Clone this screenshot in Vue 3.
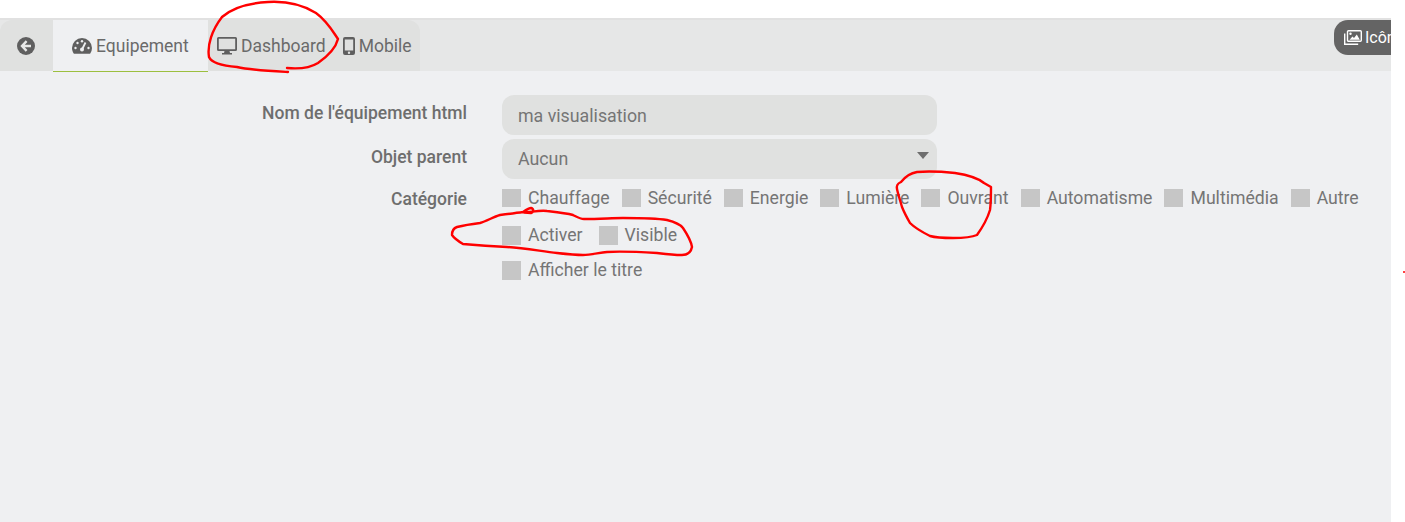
<template>
  <div class="page">
    <div class="panel">
      <div class="tabbar">
        <div class="tabs">
          <a class="tab back">
            <svg class="ico" width="18" height="18" viewBox="0 0 18 18">
              <circle cx="9" cy="9" r="9" fill="#5f5f5f" />
              <path d="M9.6 4.2 5 9l4.6 4.8M5.4 9H14" fill="none" stroke="#e8e9e8" stroke-width="2.4" />
            </svg>
          </a>
          <a class="tab active">
            <svg class="ico" width="20" height="16" viewBox="0 0 20 16">
              <path d="M10 0a10 10 0 0 0-10 10c0 2.2.7 4.2 1.9 5.800h16.200A10 10 0 0 0 20 10 10 10 0 0 0 10 0z" fill="#5f5f5f" />
              <path d="M10 11.500 13.500 4.500" stroke="#eeeff1" stroke-width="1.800" />
              <circle cx="10" cy="11.500" r="2" fill="#eeeff1" />
              <circle cx="3.500" cy="10" r="1.200" fill="#eeeff1" />
              <circle cx="5.500" cy="5" r="1.200" fill="#eeeff1" />
              <circle cx="10" cy="3.200" r="1.200" fill="#eeeff1" />
              <circle cx="16.500" cy="10" r="1.200" fill="#eeeff1" />
            </svg>
            Equipement
          </a>
          <a class="tab">
            <svg class="ico" width="20" height="18" viewBox="0 0 20 18">
              <path fill-rule="evenodd" d="M1.500 0h17A1.500 1.500 0 0 1 20 1.500v11a1.500 1.500 0 0 1-1.500 1.500H12.500l.5 2h2v1.500H5V16h2l.5-2H1.500A1.500 1.500 0 0 1 0 12.500v-11A1.500 1.500 0 0 1 1.500 0zM1.800 1.800v10.400h16.400V1.800z" fill="#5f5f5f" />
            </svg>
            Dashboard
          </a>
          <a class="tab mobile">
            <svg class="ico" width="12" height="18" viewBox="0 0 12 18">
              <path fill-rule="evenodd" d="M2 0h8a2 2 0 0 1 2 2v14a2 2 0 0 1-2 2H2a2 2 0 0 1-2-2V2a2 2 0 0 1 2-2zM1.800 2.600v11h8.400v-11zM6 14.500a1.200 1.200 0 1 0 0 2.400 1.200 1.200 0 0 0 0-2.400z" fill="#5f5f5f" />
            </svg>
            Mobile
          </a>
        </div>
        <button class="icon-btn">
          <svg class="ico" width="18" height="15" viewBox="0 0 18 15">
            <rect x="3.500" y="0.700" width="13.800" height="10.600" rx="1" fill="none" stroke="#fff" stroke-width="1.400" />
            <path d="M.7 3.500v10.800h13.500" fill="none" stroke="#fff" stroke-width="1.400" />
            <path d="M5.500 9.800 8.500 6.500l1.500 1.500 2.800-3.500 3 5.300z" fill="#fff" />
            <circle cx="6.500" cy="3.800" r="1.200" fill="#fff" />
          </svg>
          Icône
        </button>
      </div>

      <form class="form" @submit.prevent>
        <label class="lbl">Nom de l'équipement html</label>
        <div class="field">ma visualisation</div>

        <label class="lbl">Objet parent</label>
        <div class="field select">Aucun<span class="caret"></span></div>

        <label class="lbl cat">Catégorie</label>
        <div class="checks row-cat">
          <label v-for="c in categories" :key="c" class="check"><span class="box"></span>{{ c }}</label>
        </div>

        <div class="checks row-activer">
          <label v-for="c in states" :key="c" class="check"><span class="box"></span>{{ c }}</label>
        </div>
        <div class="checks row-titre">
          <label class="check"><span class="box"></span>Afficher le titre</label>
        </div>
      </form>
    </div>

    <svg class="scribbles" width="1405" height="522" viewBox="0 0 1405 522">
      <path v-for="(d, i) in scribbles" :key="i" :d="d" />
      <circle cx="1404" cy="272" r="1" fill="#f00" />
    </svg>
  </div>
</template>

<script setup>
const categories = ['Chauffage', 'Sécurité', 'Energie', 'Lumière', 'Ouvrant', 'Automatisme', 'Multimédia', 'Autre']
const states = ['Activer', 'Visible']

// hand drawn red circles on top of the capture
const scribbles = [
  'M288 72C270 71 250 70 237 67C225 66 212 64 209 57C207 45 212 30 222 17C232 8 250 3 268 2C285 1 303 5 316 13C327 21 332 30 338 39C336 47 328 56 318 63C310 68 298 69 287 68',
  'M897 189C896 184 899 183 901 182C905 177 911 173 917 172C930 171 945 172 955 173C968 175 978 178 984 183L991 187C991 195 991 203 990 210C987 220 982 228 977 235C970 238 962 238 953 238C945 238 937 238 930 236C922 232 914 227 910 223C906 216 904 212 902 207C900 200 898 194 897 189',
  'M523 212C526 210 529 208 531 208C534 209 534 212 531 213L524 212.500C532 212 540 210 547 211C556 212 566 213 573 215C577 217 580 219 584 219C600 219 612 218 623 218C640 218 655 218 667 220C675 222 680 224 683 228C687 234 691 240 692 247C691 252 688 255 682 255C672 255 665 254 657 253C640 252 622 251 607 252C598 253 590 255 583 255C575 255 566 254 557 253C540 251 523 248 507 247C490 246 476 245 463 244C458 241 454 238 452 235C452 231 454 228 457 227C465 225 472 224 480 223C487 221 493 217 500 215C508 214 516 213 523 212',
]
</script>

<style scoped>
.page {
  position: relative;
  width: 1405px;
  height: 522px;
  overflow: hidden;
  background: #fff;
  font-family: Roboto, "Liberation Sans", sans-serif;
  color: #757575;
}

.panel {
  width: 1391px;
  height: 504px;
  margin-top: 18px;
  background: #eff0f2;
  border-top: 2px solid #e1e1e1;
  box-sizing: border-box;
  overflow: hidden;
}

.tabbar {
  display: flex;
  justify-content: space-between;
  height: 51px;
  background: #e6e7e7;
}

.tabs {
  display: flex;
  width: 420px;
  background: #e0e1e0;
  border-radius: 12px 12px 0 0;
}

.tab {
  display: flex;
  align-items: center;
  gap: 4px;
  padding-left: 9px;
  font-size: 17.500px;
  color: #6a6a6a;
  white-space: nowrap;
  box-sizing: border-box;
}

.tab.back {
  width: 53px;
  padding-left: 17px;
}

.tab.active {
  width: 155px;
  height: 52px;
  padding-left: 19px;
  background: #eff0f2;
  border-bottom: 1px solid #9cbf3f;
}

.tab.mobile {
  padding-left: 17px;
}

.ico {
  flex: none;
}

.icon-btn {
  display: flex;
  align-items: center;
  gap: 3px;
  width: 57px;
  height: 35px;
  padding: 0 0 0 10px;
  border: none;
  border-radius: 14px 0 0 14px;
  background: #646464;
  color: #fff;
  font: inherit;
  font-size: 16px;
  overflow: hidden;
  white-space: nowrap;
}

.form {
  display: grid;
  grid-template-columns: 467px 1fr;
  column-gap: 35px;
  padding-top: 24px;
}

.lbl {
  text-align: right;
  font-size: 17.500px;
  font-weight: 500;
  line-height: 36px;
  color: #6e6e6e;
  white-space: nowrap;
}

.field {
  width: 435px;
  height: 40px;
  margin-bottom: 4px;
  padding-left: 16px;
  box-sizing: border-box;
  border-radius: 12px;
  background: #e0e1e0;
  font-size: 17.800px;
  line-height: 41px;
}

.select {
  position: relative;
  line-height: 40px;
}

.caret {
  position: absolute;
  top: 13px;
  right: 8px;
  border-left: 6px solid transparent;
  border-right: 6px solid transparent;
  border-top: 7px solid #6e6e6e;
}

.lbl.cat {
  margin-top: 1px;
  line-height: 30px;
}

.checks {
  display: flex;
  gap: 12px;
  grid-column: 2;
  align-items: center;
  font-size: 17.650px;
}

.row-cat {
  height: 30px;
}

.row-activer {
  gap: 16px;
  height: 36px;
  margin-top: 3px;
}

.row-titre {
  height: 34px;
}

.check {
  display: flex;
  align-items: center;
  gap: 7px;
  white-space: nowrap;
}

.box {
  width: 19px;
  height: 18px;
  background: #c6c6c6;
}

.row-activer .box,
.row-titre .box {
  height: 19px;
}

.scribbles {
  position: absolute;
  top: 0;
  left: 0;
  pointer-events: none;
}

.scribbles path {
  fill: none;
  stroke: #f00;
  stroke-width: 2.400;
  stroke-linejoin: round;
  stroke-linecap: round;
}
</style>
